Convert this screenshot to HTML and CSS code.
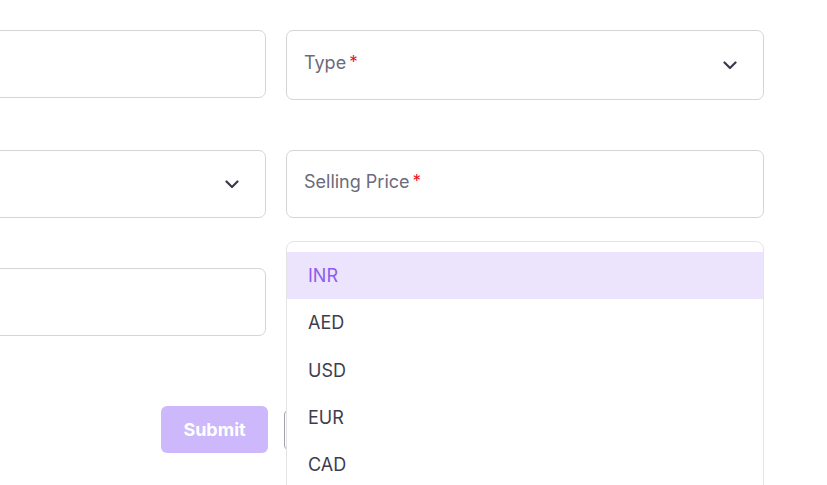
FILE: index.html
```html
<!DOCTYPE html>
<html lang="en">
<head>
<meta charset="utf-8">
<title>Product form</title>
<link rel="stylesheet" href="styles.css">
</head>
<body>
<form class="form">
  <div class="grid row1">
    <div class="field"></div>
    <div class="field select tall">
      <span class="label">Type<span class="req">*</span></span>
      <svg class="chev" viewBox="0 0 14 9" width="14" height="9"><path d="M1.5 1.5 L7 7 L12.5 1.5" fill="none" stroke="#3a3a4c" stroke-width="2.2" stroke-linecap="round" stroke-linejoin="round"/></svg>
    </div>
  </div>
  <div class="grid row2">
    <div class="field select">
      <span class="label"></span>
      <svg class="chev" viewBox="0 0 14 9" width="14" height="9"><path d="M1.5 1.5 L7 7 L12.5 1.5" fill="none" stroke="#3a3a4c" stroke-width="2.2" stroke-linecap="round" stroke-linejoin="round"/></svg>
    </div>
    <div class="field">
      <span class="label">Selling Price<span class="req">*</span></span>
    </div>
  </div>
  <div class="grid row3">
    <div class="field"></div>
    <div class="cell">
      <div class="field"></div>
      <ul class="menu">
        <li class="opt active">INR</li>
        <li class="opt">AED</li>
        <li class="opt">USD</li>
        <li class="opt">EUR</li>
        <li class="opt">CAD</li>
      </ul>
    </div>
  </div>
  <div class="actions">
    <button type="button" class="btn primary">Submit</button>
    <button type="button" class="btn secondary" aria-label="Cancel"></button>
  </div>
</form>
</body>
</html>
```

FILE: styles.css
```css
* { box-sizing: border-box; }
html, body { margin: 0; padding: 0; background: #fff; overflow: hidden; }
body {
  font-family: Inter, "Noto Sans", sans-serif;
  width: 827px;
  height: 485px;
}
.form {
  margin-left: -213px;
  padding-top: 30px;
}
.grid {
  display: grid;
  grid-template-columns: 479px 478px;
  column-gap: 20px;
  align-items: start;
}
.row1 { margin-bottom: 50px; }
.row2 { margin-bottom: 50px; }
.row3 { margin-bottom: 70px; }
.cell { position: relative; }
.field {
  height: 68px;
  border: 1px solid #d4d4d8;
  border-radius: 7px;
  background: #fff;
  display: flex;
  align-items: center;
  padding: 0 17px 5px;
}
.field.tall { height: 70px; }
.select { justify-content: space-between; padding-right: 26px; }
.label {
  font-size: 18px;
  color: #6b6b7b;
}
.req {
  color: #e5121f;
  margin-left: 3px;
  font-size: 17px;
  position: relative;
  top: -1px;
}
.chev { display: block; margin-top: 5px; }
.menu {
  position: absolute;
  left: 0;
  top: -27px;
  width: 478px;
  height: 260px;
  margin: 0;
  padding: 10px 0 0;
  list-style: none;
  background: #fff;
  border: 1px solid #e4e4e7;
  border-radius: 8px;
  z-index: 5;
}
.opt {
  height: 47.3px;
  display: flex;
  align-items: center;
  padding-left: 21px;
  font-size: 18px;
  color: #3d3d4e;
}
.opt.active {
  background: #ece4fd;
  color: #8d5cf0;
}
.actions {
  display: flex;
  gap: 16px;
  padding-left: 374px;
}
.btn {
  height: 47px;
  border-radius: 6px;
  font-family: Inter, sans-serif;
  font-size: 18px;
  font-weight: 700;
  cursor: pointer;
}
.primary {
  width: 107px;
  background: #cdb8fc;
  border: none;
  color: #fff;
}
.secondary {
  margin-top: 3px;
  height: 42px;
  width: 100px;
  background: #fff;
  border: 1px solid #a1a1aa;
}
```
